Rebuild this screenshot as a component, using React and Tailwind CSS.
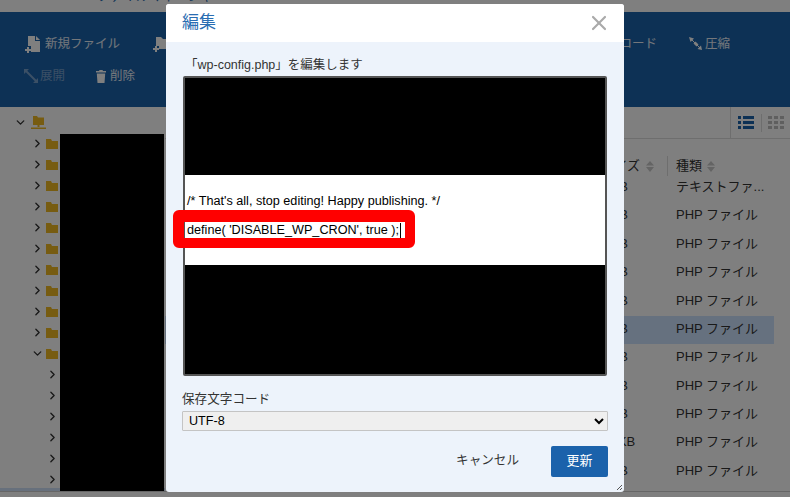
import React from "react";
import { ChevronRight, ChevronDown, X } from "lucide-react";

const jp = "font-['Liberation_Sans','Noto_Sans_CJK_JP',sans-serif]";

function Arrows({ className = "" }) {
  return (
    <svg width="8" height="11" viewBox="0 0 8 11" className={`shrink-0 ${className}`}>
      <path d="M0 4.5h8L4 0z" fill="#c8c8c8" />
      <path d="M0 6h8l-4 5z" fill="#c8c8c8" />
    </svg>
  );
}

function FileIcon() {
  return (
    <svg width="18" height="18" viewBox="0 0 18 18" className="shrink-0">
      <path d="M3 1h7v5h5v11H6v-6H3z" fill="#fff" />
      <path d="M11 1l4 4h-4z" fill="#fff" />
      <path d="M0 14h2v-2h2v2h2v2H4v2H2v-2H0z" fill="#fff" />
    </svg>
  );
}

function FolderPlusIcon() {
  return (
    <svg width="18" height="18" viewBox="0 0 18 18" className="shrink-0">
      <path d="M3 2h5l2 2h7v10H6v-3H3z" fill="#fff" />
      <path d="M0 13h2v-2h2v2h2v2H4v2H2v-2H0z" fill="#fff" />
    </svg>
  );
}

function SqueezeIcon() {
  return (
    <svg width="14" height="14" viewBox="0 0 14 14" className="shrink-0">
      <path d="M0 0l5 1.500L1.500 5z" fill="#fff" />
      <path d="M4.500 6.500l2-2 3 3-2 2z" fill="#fff" />
      <path d="M13 13l-4.500-1L12 8.500z" fill="#fff" />
      <path d="M2 2l10 10" stroke="#fff" strokeWidth="1" />
    </svg>
  );
}

function ExpandIcon() {
  return (
    <svg width="14" height="14" viewBox="0 0 14 14" className="shrink-0 opacity-40">
      <path d="M0 0h5L0 5zM14 14H9l5-5z" fill="#fff" />
      <path d="M2 2l10 10" stroke="#fff" strokeWidth="2" />
    </svg>
  );
}

function TrashIcon() {
  return (
    <svg width="10" height="13" viewBox="0 0 10 13" className="shrink-0">
      <path d="M3.500 0h3l.5 1h3v1.500H0V1h3zM.8 3.500h8.400L8.500 13h-7z" fill="#fff" />
    </svg>
  );
}

function Folder() {
  return (
    <svg width="12" height="10" viewBox="0 0 12 10" className="ml-[2px] shrink-0">
      <path d="M0 0h5l1 2h6v8H0z" fill="#eeb922" />
    </svg>
  );
}

function TreeRow({ indent = false, open = false, folder = true }) {
  const Icon = open ? ChevronDown : ChevronRight;
  return (
    <div className={`flex h-[21px] shrink-0 items-center ${indent ? "pl-[46px]" : "pl-[31px]"}`}>
      <Icon size={13} strokeWidth={2.5} className="shrink-0 text-[#333]" />
      {folder && <Folder />}
    </div>
  );
}

const rows = [
  ["1.1 KB", "テキストファ..."],
  ["4.5 KB", "PHP ファイル"],
  ["3.1 KB", "PHP ファイル"],
  ["2.2 KB", "PHP ファイル"],
  ["5.5 KB", "PHP ファイル"],
  ["3.9 KB", "PHP ファイル", true],
  ["6.4 KB", "PHP ファイル"],
  ["2.4 KB", "PHP ファイル"],
  ["3.3 KB", "PHP ファイル"],
  ["47.5 KB", "PHP ファイル"],
  ["8.5 KB", "PHP ファイル"],
];

function Tool({ icon, label, dim, className = "" }) {
  return (
    <div className={`flex items-center gap-[2px] whitespace-nowrap text-[12.5px] ${dim ? "text-white/40" : "text-white/90"} ${className}`}>
      {icon}
      <span>{label}</span>
    </div>
  );
}

export default function App() {
  return (
    <div className={`relative h-[497px] w-[790px] overflow-hidden bg-white text-[#333] ${jp}`}>
      {/* page */}
      <div className="flex h-full flex-col">
        <div className="h-[12px] shrink-0 overflow-hidden bg-white">
          <div className="-mt-[15px] flex items-baseline gap-2 pl-[8px] text-[17px] leading-[20px] font-bold text-[#1d1d1d]">
            <span>XSERVER</span>
            <span className="text-[13px] font-normal text-[#1b64aa]">ファイルマネージャ</span>
          </div>
        </div>
        <div className="flex h-[95px] shrink-0 flex-col gap-[12px] bg-[#1b62ab] pl-[25px] pt-[22px]">
          <div className="flex h-[20px] items-center">
            <Tool icon={<FileIcon />} label="新規ファイル" className="w-[128px]" />
            <Tool icon={<FolderPlusIcon />} label="新規フォルダ" className="w-[400px]" />
            <Tool icon={<span />} label="アップロード" className="w-[104px] justify-end" />
            <Tool icon={<SqueezeIcon />} label="圧縮" className="ml-[32px]" />
          </div>
          <div className="-ml-[1px] flex h-[20px] items-center">
            <Tool dim icon={<ExpandIcon />} label="展開" className="w-[72px]" />
            <Tool icon={<TrashIcon />} label="削除" className="gap-[4px]" />
          </div>
        </div>
        <div className="flex min-h-0 flex-1">
          <div className="relative flex w-[165px] shrink-0 flex-col overflow-hidden bg-white">
            <div className="h-[4px] shrink-0" />
            <div className="flex h-[22px] shrink-0 items-center pl-[14px]">
              <ChevronDown size={13} strokeWidth={2.5} className="text-[#333]" />
              <svg width="15" height="13" viewBox="0 0 15 13" className="ml-[4px]">
                <path d="M2 0h4l1 1.500h6V9H8.500v2H6.500V9H2z" fill="#eeb922" />
                <path d="M0 11.500h15V13H0z" fill="#eeb922" />
              </svg>
            </div>
            {Array.from({ length: 10 }).map((_, i) => <TreeRow key={i} />)}
            <TreeRow open />
            {Array.from({ length: 6 }).map((_, i) => <TreeRow key={i} indent folder={false} />)}
            <div className="-mt-[2px] h-[3px] shrink-0 bg-[#cfe0f8]" />
            <div className="absolute bottom-0 left-[60px] top-[27px] w-[104px] bg-black" />
          </div>
          <div className="flex min-w-0 flex-1 flex-col">
            <div className="flex h-[32px] shrink-0 justify-end border-b border-[#ddd]">
              <div className="flex w-[60px] items-center border-l border-[#ddd] pl-[7px]">
                <svg width="16" height="15" viewBox="0 0 16 15" className="shrink-0">
                  <path d="M0 1h3v3H0zM5 1h11v3H5zM0 6h3v3H0zM5 6h11v3H5zM0 11h3v3H0zM5 11h11v3H5z" fill="#1b62ab" />
                </svg>
                <div className="ml-[7px] h-[18px] w-px bg-[#ddd]" />
                <svg width="16" height="15" viewBox="0 0 16 15" className="ml-[6px] shrink-0">
                  <path d="M0 1h4v3H0zM6 1h4v3H6zM12 1h4v3h-4zM0 6h4v3H0zM6 6h4v3H6zM12 6h4v3h-4zM0 11h4v3H0zM6 11h4v3H6zM12 11h4v3h-4z" fill="#bebebe" />
                </svg>
              </div>
            </div>
            <div className="-mb-[2px] flex h-[37px] shrink-0 items-end text-[13px]">
              <div className="flex h-[20px] items-center">
                <div className="w-[475px] text-right">サイズ</div>
                <Arrows className="ml-[6px]" />
                <div className="ml-[13px] h-[20px] w-px bg-[#ddd]" />
                <div className="ml-[8px]">種類</div>
                <Arrows className="ml-[5px]" />
              </div>
            </div>
            <div className="mr-[16px] flex flex-col text-[13px]">
              {rows.map(([size, kind, sel], i) => (
                <div key={i} className={`flex h-[28.4px] shrink-0 items-center pb-[3px] ${sel ? "bg-[#cde2fe]" : ""}`}>
                  <div className="w-[511px] pl-[424px]">{size}</div>
                  <div>{kind}</div>
                </div>
              ))}
            </div>
          </div>
        </div>
        <div className="h-[6px] shrink-0 border-t border-[#ccc] bg-white" />
      </div>

      {/* backdrop */}
      <div className="absolute inset-0 bg-black/50" />

      {/* modal */}
      <div className="absolute left-[166px] top-[4px] flex h-[488px] w-[458px] flex-col overflow-hidden rounded-[3px] bg-[#edf3fb]">
        <div className="flex h-[38px] shrink-0 items-center justify-between bg-white pl-[16px] pr-[13px]">
          <span className="text-[17px] text-[#2a6db2]">編集</span>
          <X size={24} strokeWidth={2.2} className="text-[#aaa]" />
        </div>
        <div className="flex min-h-0 flex-1 flex-col px-[16px]">
          <div className="mt-[13px] h-[20px] pl-[3px] text-[12.5px] leading-[20px] text-[#333]">「wp-config.php」を編集します</div>
          <div className="mx-[1px] mt-[1px] flex h-[300px] flex-col rounded-[2px] border-2 border-[#555] bg-white">
            <div className="h-[97px] bg-black" />
            <div className="flex-1 pl-[2px] text-[12.65px] text-black">
              <div className="mt-[17px] leading-[18px]">/* That's all, stop editing! Happy publishing. */</div>
              <div className="mt-[11px] flex h-[18px] items-center leading-[18px]">define( 'DISABLE_WP_CRON', true );<span className="ml-[1px] inline-block h-[15px] w-px bg-black" /></div>
            </div>
            <div className="h-[109px] bg-black" />
          </div>
          <div className="mt-[14px] h-[18px] text-[12.6px] leading-[18px]">保存文字コード</div>
          <select defaultValue="UTF-8" className="mt-[3px] h-[20px] w-full rounded-[1px] border border-[#c4c4c4] bg-[#efefef] pl-[2px] text-[12.6px] text-black [appearance:auto]">
            <option>UTF-8</option>
          </select>
          <div className="mt-[15px] flex items-center justify-end">
            <button className="mr-[32px] pb-[2px] text-[12.6px] text-[#333]">キャンセル</button>
            <button className="h-[31px] w-[57px] rounded-[2px] bg-[#1b62ab] pb-[2px] text-[13px] text-white">更新</button>
          </div>
        </div>
        <svg width="7" height="7" viewBox="0 0 7 7" className="absolute bottom-[1px] right-[1px]">
          <path d="M1 6l5-5M4 6l2-2" stroke="#555" strokeWidth="1" />
        </svg>
      </div>

      {/* red annotation */}
      <div className="absolute left-[173px] top-[210px] h-[38px] w-[242px] rounded-[6px] border-t-[12px] border-r-[10px] border-b-[10px] border-l-[11px] border-[#ff0000]" />
    </div>
  );
}
